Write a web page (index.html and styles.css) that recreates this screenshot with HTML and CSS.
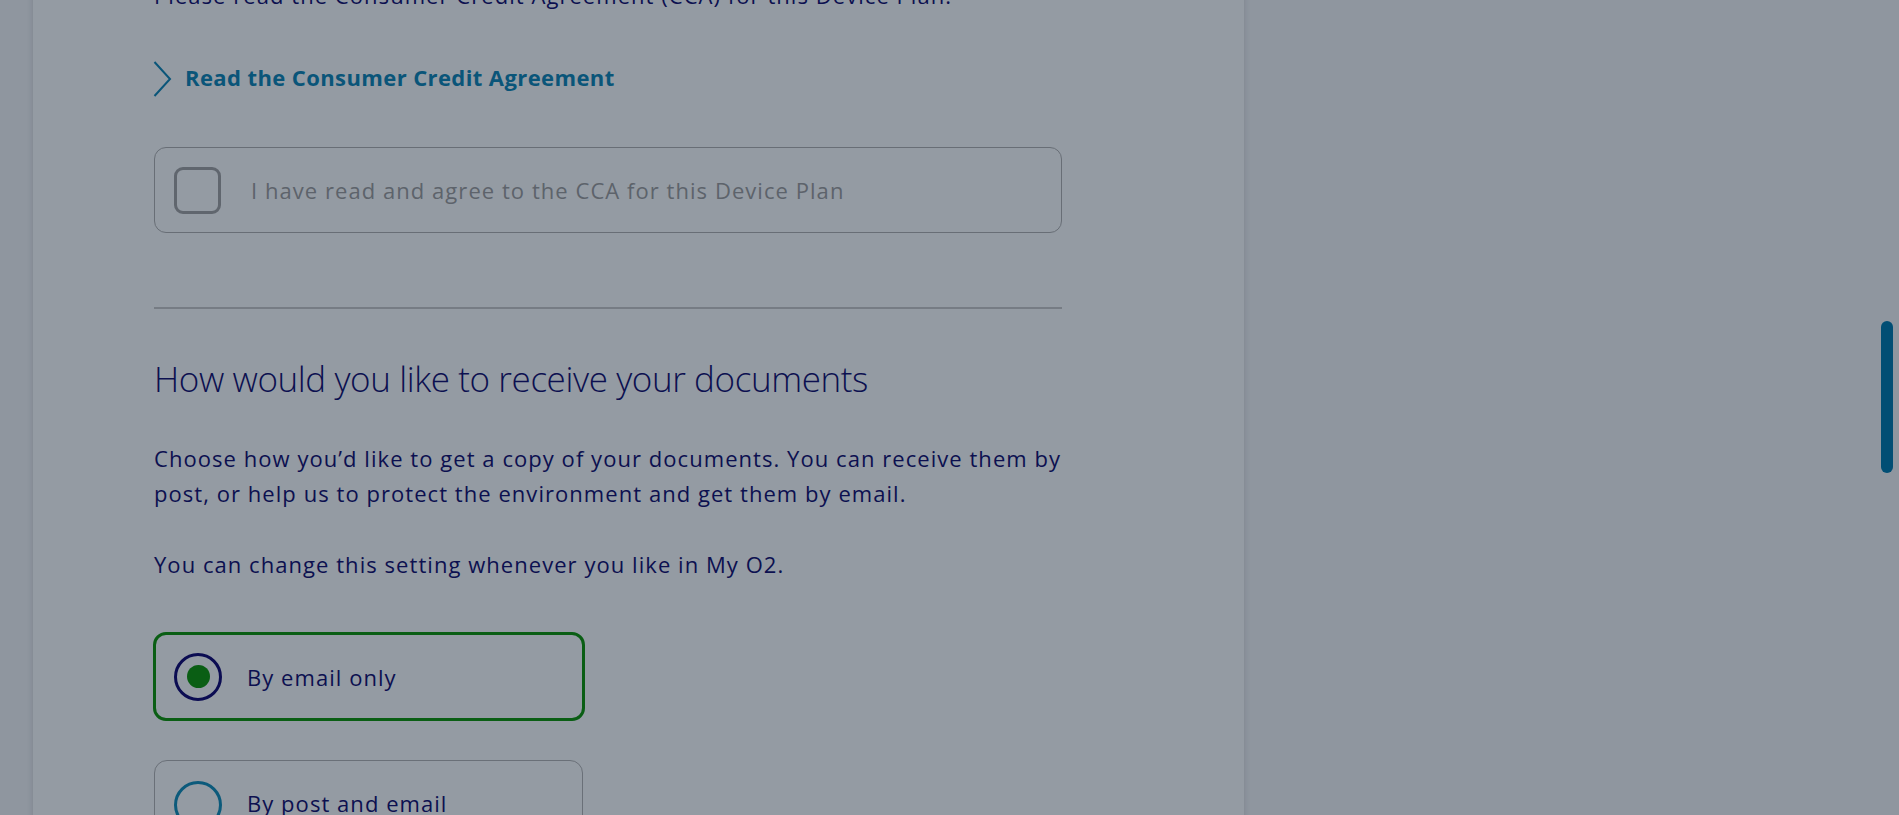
FILE: index.html
```html
<!DOCTYPE html>
<html lang="en">
<head>
<meta charset="utf-8">
<title>Device Plan – Documents</title>
<link rel="stylesheet" href="styles.css">
</head>
<body>
<div class="page">
  <main class="card">
    <div class="column">
      <p class="intro">Please read the Consumer Credit Agreement (CCA) for this Device Plan.</p>

      <a class="link-row" href="#">
        <svg class="chevron" width="19" height="36" viewBox="0 0 19 36" aria-hidden="true">
          <polyline points="1.5,1 17,18 1.5,35" fill="none" stroke="currentColor" stroke-width="2"/>
        </svg>
        <span class="link-text">Read the Consumer Credit Agreement</span>
      </a>

      <label class="check-box">
        <span class="check"></span>
        <span class="check-label">I have read and agree to the CCA for this Device Plan</span>
      </label>

      <hr class="divider">

      <h2 class="heading">How would you like to receive your documents</h2>

      <p class="body-text">Choose how you’d like to get a copy of your documents. You can receive them by post, or help us to protect the environment and get them by email.</p>
      <p class="body-text">You can change this setting whenever you like in My O2.</p>

      <div class="options">
        <label class="option option-selected">
          <span class="radio radio-on"><span class="radio-dot"></span></span>
          <span class="option-label">By email only</span>
        </label>
        <label class="option">
          <span class="radio radio-off"></span>
          <span class="option-label option-label-low">By post and email</span>
        </label>
      </div>
    </div>
  </main>
</div>
<div class="scroll-thumb"></div>
</body>
</html>
```

FILE: styles.css
```css
html, body {
  margin: 0;
  padding: 0;
  height: 100%;
  overflow: hidden;
}

body {
  background: #8f969f;
  font-family: "Open Sans", "Noto Sans", sans-serif;
  color: #0c1050;
}

.page {
  padding-left: 33px;
  margin-top: -60px;
}

.card {
  width: 1211px;
  min-height: 1000px;
  box-sizing: border-box;
  background: #949ba3;
  box-shadow: 0 0 6px rgba(40, 48, 60, 0.18);
  padding: 38px 0 0 121px;
}

.column {
  width: 908px;
  display: flex;
  flex-direction: column;
}

.intro {
  margin: 0;
  font-size: 22px;
  line-height: 35px;
  letter-spacing: 1.05px;
  color: #0c1050;
}

.link-row {
  margin-top: 48px;
  display: flex;
  align-items: center;
  gap: 13px;
  height: 36px;
  text-decoration: none;
  color: #0a5579;
}

.chevron {
  display: block;
  margin-left: -1px;
  flex: none;
}

.link-text {
  font-size: 22px;
  font-weight: 700;
  line-height: 35px;
  letter-spacing: 0.4px;
  margin-top: -4px;
}

.check-box {
  margin-top: 50px;
  height: 86px;
  box-sizing: border-box;
  border: 1.5px solid #686e76;
  border-radius: 12px;
  display: flex;
  align-items: center;
  padding-left: 19px;
  gap: 30px;
}

.check {
  width: 47px;
  height: 47px;
  box-sizing: border-box;
  border: 3px solid #60666e;
  border-radius: 9px;
  flex: none;
}

.check-label {
  font-size: 22px;
  letter-spacing: 1.05px;
  color: #5d636b;
}

.divider {
  margin: 74px 0 0;
  border: 0;
  border-top: 2px solid #767c84;
  height: 0;
}

.heading {
  margin: 49px 0 0;
  font-size: 35px;
  font-weight: 300;
  line-height: 42px;
  letter-spacing: -0.4px;
  color: #0c1050;
}

.body-text {
  margin: 41px 0 0;
  font-size: 22px;
  line-height: 35px;
  letter-spacing: 1.05px;
  color: #0c1050;
}

.body-text + .body-text {
  margin-top: 36px;
}

.options {
  margin-top: 50px;
  display: flex;
  flex-direction: column;
  align-items: flex-start;
  gap: 39px;
}

.option {
  width: 429px;
  height: 89px;
  box-sizing: border-box;
  border: 1.5px solid #6a7078;
  border-radius: 13px;
  display: flex;
  align-items: center;
  padding-left: 19px;
  gap: 25px;
}

.option-selected {
  width: 432px;
  border: 3px solid #0a5e14;
  padding-left: 18px;
  margin-left: -1px;
}

.radio {
  width: 48px;
  height: 48px;
  box-sizing: border-box;
  border-radius: 50%;
  border: 3px solid #0b0c52;
  display: flex;
  align-items: center;
  justify-content: center;
  flex: none;
}

.radio-off {
  border-color: #0c5a7b;
}

.radio-dot {
  width: 23px;
  height: 23px;
  border-radius: 50%;
  background: #0a5e14;
}

.option-label {
  font-size: 22px;
  letter-spacing: 1.05px;
  color: #0c1050;
}

.option-label-low {
  margin-top: -4px;
}

.scroll-thumb {
  position: fixed;
  right: 6px;
  top: 321px;
  width: 12px;
  height: 152px;
  border-radius: 6px;
  background: #014e74;
}
```
